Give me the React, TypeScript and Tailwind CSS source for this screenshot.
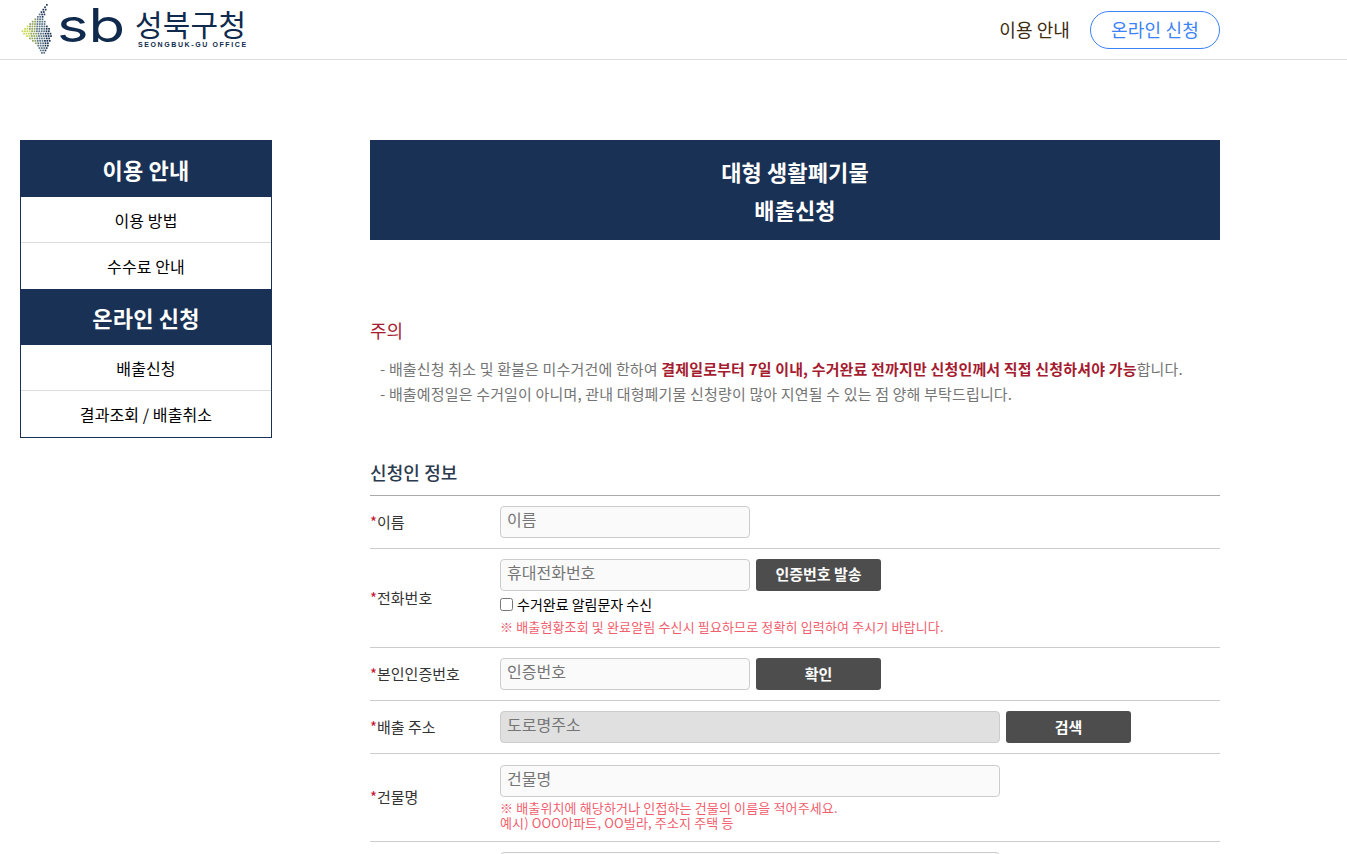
const font = "[font-family:'Noto_Sans_CJK_KR','Noto_Sans',sans-serif]";

// 로고의 점 무늬: 행마다 왼쪽/오른쪽 끝을 계산해서 나뭇잎 모양으로 채운다
function edge(y: number, pts: [number, number][]) {
  for (let i = 0; i < pts.length - 1; i++) {
    const [y0, x0] = pts[i];
    const [y1, x1] = pts[i + 1];
    if (y >= y0 && y <= y1) return x0 + ((y - y0) / (y1 - y0)) * (x1 - x0);
  }
  return pts[0][1];
}

const leftEdge: [number, number][] = [[0, 26], [12, 17], [27, 1], [40, 17], [50, 22]];
const rightEdge: [number, number][] = [[0, 27], [15, 23], [28, 31], [38, 29], [50, 24]];

function dotColor(x: number, y: number) {
  if (y < 14) return x > 20 ? '#233a5c' : '#5b7290';
  if (x < 9) return '#c9d84f';
  if (x < 16) return '#8fa55c';
  if (x < 24) return '#567384';
  return '#1b3353';
}

function LogoMark() {
  const dots: { x: number; y: number }[] = [];
  for (let y = 0; y <= 50; y += 2.4) {
    for (let x = edge(y, leftEdge); x <= edge(y, rightEdge); x += 2.4) {
      dots.push({ x, y });
    }
  }
  return (
    <svg width="33" height="52" viewBox="0 0 33 52" className="block shrink-0 mt-[1px]">
      {dots.map((d, i) => (
        <rect key={i} x={d.x} y={d.y} width={1.7} height={1.7} fill={dotColor(d.x, d.y)} />
      ))}
    </svg>
  );
}

function Logo() {
  return (
    <div className="flex items-center h-[59px]">
      <LogoMark />
      <span className="block ml-[4px] w-[78px] mt-[-9px] origin-left scale-x-[1.3] text-[46px] leading-[46px] text-[#0f2a4d] font-['Inter',sans-serif] font-normal">
        sb
      </span>
      <div className="flex flex-col items-start mt-[-5px]">
        <span className={`${font} text-[30px] leading-[34px] tracking-[0.2px] text-[#0f2a4d]`}>성북구청</span>
        <span className="ml-[3px] mt-[1px] text-[7px] leading-[8px] font-bold tracking-[1.6px] text-[#0f2a4d] font-['Liberation_Sans',sans-serif] whitespace-nowrap">
          SEONGBUK-GU OFFICE
        </span>
      </div>
    </div>
  );
}

function SideHead({ children }: { children: string }) {
  return <div className="h-[56px] pt-[1px] bg-[#193154] text-white text-[22px] tracking-[0.2px] font-bold flex items-center justify-center">{children}</div>;
}

function SideItem({ children, last }: { children: string; last?: boolean }) {
  return (
    <div className={`h-[46px] flex items-center justify-center text-[16px] tracking-[0.1px] text-black ${last ? '' : 'border-b border-[#dddddd]'}`}>
      {children}
    </div>
  );
}

function Row({ label, h, children }: { label: string; h: string; children: React.ReactNode }) {
  return (
    <div className={`flex items-center border-b border-[#cccccc] ${h}`}>
      <div className="w-[130px] text-[15px] leading-[20px] pb-[1px] text-[#333333] shrink-0">
        <span className="text-[#c8102e]">*</span>
        {label}
      </div>
      <div className="flex-1">{children}</div>
    </div>
  );
}

function Field({ placeholder, wide, disabled }: { placeholder: string; wide?: boolean; disabled?: boolean }) {
  return (
    <input
      placeholder={placeholder}
      readOnly
      className={`${font} block h-[32px] rounded-[4px] border border-[#cccccc] px-[6px] pb-[6px] text-[16px] placeholder:text-[#757575] ${
        wide ? 'w-[500px]' : 'w-[250px]'
      } ${disabled ? 'bg-[#e0e0e0]' : 'bg-[#fafafa]'}`}
    />
  );
}

function DarkButton({ children }: { children: string }) {
  return (
    <button className="w-[125px] h-[32px] rounded-[3px] bg-[#4d4d4d] text-white text-[15px] font-bold flex items-center justify-center">
      {children}
    </button>
  );
}

export default function App() {
  return (
    <div className={`${font} h-[854px] overflow-hidden bg-white`}>
      <header className="h-[60px] border-b border-[#dddddd]">
        <div className="w-[1200px] ml-[20px] flex items-center justify-between h-[59px]">
          <Logo />
          <div className="flex items-center">
            <span className="text-[18px] tracking-[0.1px] text-[#3d2b0f]">이용 안내</span>
            <span className="ml-[20px] w-[130px] h-[38px] rounded-full border border-[#3b82f6] text-[#3b82f6] text-[18px] tracking-[0.2px] flex items-center justify-center">
              온라인 신청
            </span>
          </div>
        </div>
      </header>

      <div className="w-[1200px] ml-[20px] flex items-start pt-[80px]">
        <aside className="w-[252px] border border-[#193154] shrink-0">
          <SideHead>이용 안내</SideHead>
          <SideItem>이용 방법</SideItem>
          <SideItem last>수수료 안내</SideItem>
          <SideHead>온라인 신청</SideHead>
          <SideItem>배출신청</SideItem>
          <SideItem last>결과조회 / 배출취소</SideItem>
        </aside>

        <main className="w-[850px] ml-[98px]">
          <div className="h-[100px] bg-[#193154] text-white text-[22px] tracking-[0.1px] font-bold flex flex-col items-center justify-center leading-[38px]">
            <div>대형 생활폐기물</div>
            <div>배출신청</div>
          </div>

          <h3 className="mt-[77px] text-[18px] leading-[26px] text-[#a51c30]">주의</h3>
          <div className="mt-[13px] pl-[10px] text-[15px] tracking-[0.16px] leading-[25px] text-[#757575]">
            <p>
              - 배출신청 취소 및 환불은 미수거건에 한하여{' '}
              <strong className="text-[#a51c30] font-bold">결제일로부터 7일 이내, 수거완료 전까지만 신청인께서 직접 신청하셔야 가능</strong>
              합니다.
            </p>
            <p>- 배출예정일은 수거일이 아니며, 관내 대형폐기물 신청량이 많아 지연될 수 있는 점 양해 부탁드립니다.</p>
          </div>

          <h4 className="mt-[53px] text-[18px] leading-[26px] tracking-[0.1px] font-medium text-[#2c3a4f]">신청인 정보</h4>
          <div className="mt-[10px] border-t border-[#aaaaaa]">
            <Row label="이름" h="h-[53px]">
              <Field placeholder="이름" />
            </Row>
            <Row label="전화번호" h="h-[99px]">
              <div className="flex items-center gap-[6px] mt-[-2px]">
                <Field placeholder="휴대전화번호" />
                <DarkButton>인증번호 발송</DarkButton>
              </div>
              <label className="mt-[4px] flex items-center h-[20px] text-[14px] text-black">
                <input type="checkbox" className="w-[13px] h-[13px] mr-[4px]" />
                수거완료 알림문자 수신
              </label>
              <p className="mt-[3px] text-[13px] tracking-[0.14px] leading-[18px] text-[#f0606e]">※ 배출현황조회 및 완료알림 수신시 필요하므로 정확히 입력하여 주시기 바랍니다.</p>
            </Row>
            <Row label="본인인증번호" h="h-[53px]">
              <div className="flex items-center gap-[6px]">
                <Field placeholder="인증번호" />
                <DarkButton>확인</DarkButton>
              </div>
            </Row>
            <Row label="배출 주소" h="h-[53px]">
              <div className="flex items-center gap-[6px]">
                <Field placeholder="도로명주소" wide disabled />
                <DarkButton>검색</DarkButton>
              </div>
            </Row>
            <Row label="건물명" h="h-[88px]">
              <div className="mt-[-1px]">
                <Field placeholder="건물명" wide />
                <p className="mt-[3px] text-[13px] tracking-[0.14px] leading-[15px] text-[#f0606e]">
                  ※ 배출위치에 해당하거나 인접하는 건물의 이름을 적어주세요.
                  <br />
                  예시) OOO아파트, OO빌라, 주소지 주택 등
                </p>
              </div>
            </Row>
            <div className="pt-[10px] pl-[130px]">
              <Field placeholder="" wide />
            </div>
          </div>
        </main>
      </div>
    </div>
  );
}
